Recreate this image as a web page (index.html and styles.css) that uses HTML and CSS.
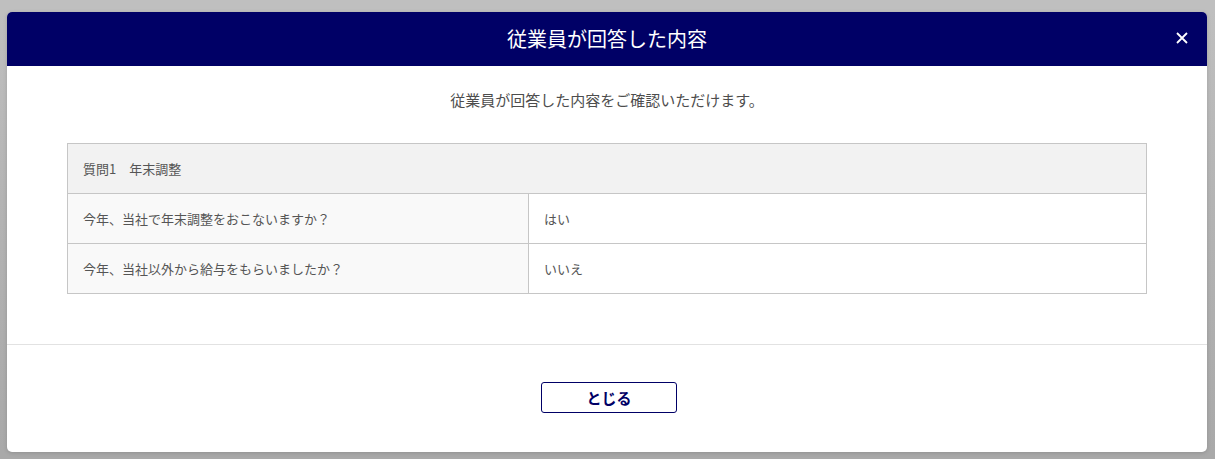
FILE: index.html
```html
<!DOCTYPE html>
<html lang="ja">
<head>
<meta charset="utf-8">
<title>従業員が回答した内容</title>
<link rel="stylesheet" href="styles.css">
</head>
<body>
<div class="backdrop">
  <div class="modal">
    <div class="modal-header">
      <h1 class="modal-title">従業員が回答した内容</h1>
      <button class="close-btn" aria-label="閉じる">
        <svg width="12" height="12" viewBox="0 0 12 12"><path d="M1 1L11 11M11 1L1 11" stroke="#fff" stroke-width="1.8" fill="none"/></svg>
      </button>
    </div>
    <div class="modal-body">
      <p class="lead">従業員が回答した内容をご確認いただけます。</p>
      <div class="qa-table">
        <div class="qa-head">質問1　年末調整</div>
        <div class="qa-row">
          <div class="qa-q">今年、当社で年末調整をおこないますか？</div>
          <div class="qa-a">はい</div>
        </div>
        <div class="qa-row">
          <div class="qa-q">今年、当社以外から給与をもらいましたか？</div>
          <div class="qa-a">いいえ</div>
        </div>
      </div>
    </div>
    <div class="modal-footer">
      <button class="btn-close">とじる</button>
    </div>
  </div>
</div>
</body>
</html>
```

FILE: styles.css
```css
* { box-sizing: border-box; }
html, body { margin: 0; padding: 0; }
body {
  width: 1215px;
  height: 459px;
  overflow: hidden;
  font-family: "Noto Sans CJK JP", "Noto Sans", sans-serif;
  background: linear-gradient(to right, #c2c2c2 0, #c2c2c2 4px, #b6b6b6 4px, #b6b6b6 6px, #bdbdbd 6px);
}
.backdrop {
  height: 459px;
  padding: 12px 8px 7px 7px;
  background: linear-gradient(to bottom, #bfbfbf 0, #bfbfbf 12px, #b4b4b4 200px, #a9a9a9 452px);
}
.modal {
  width: 1200px;
  height: 440px;
  background: #fff;
  border-radius: 5px;
  overflow: hidden;
  display: flex;
  flex-direction: column;
  box-shadow: 0 1px 4px rgba(0,0,0,0.15);
}
.modal-header {
  height: 54px;
  flex: none;
  background: #000066;
  display: flex;
  align-items: center;
  justify-content: center;
  position: relative;
}
.modal-title {
  margin: 0;
  color: #fff;
  font-size: 20px;
  font-weight: 400;
  line-height: 1;
}
.close-btn {
  position: absolute;
  right: 19px;
  top: 20px;
  width: 12px;
  height: 12px;
  padding: 0;
  border: 0;
  background: none;
  display: flex;
}
.modal-body {
  flex: none;
  height: 279px;
  padding: 24px 60px 0;
  border-bottom: 1px solid #e2e2e2;
}
.lead {
  margin: 0;
  text-align: center;
  font-size: 15px;
  line-height: 20px;
  color: #4d4d4d;
}
.qa-table {
  margin-top: 33px;
  border: 1px solid #c6c6c6;
  font-size: 13px;
  color: #555;
}
.qa-head {
  height: 50px;
  background: #f2f2f2;
  padding: 0 15px;
  display: flex;
  align-items: center;
  border-bottom: 1px solid #c6c6c6;
}
.qa-row {
  display: grid;
  grid-template-columns: 461px 1fr;
  height: 49px;
}
.qa-row + .qa-row { border-top: 1px solid #c6c6c6; height: 50px; }
.qa-q, .qa-a {
  display: flex;
  align-items: center;
  padding: 0 15px;
}
.qa-q {
  background: #f9f9f9;
  border-right: 1px solid #c6c6c6;
}
.qa-a { background: #fff; }
.modal-footer {
  flex: 1;
  display: flex;
  align-items: center;
  justify-content: center;
  padding: 0 0 2px 4px;
}
.btn-close {
  width: 136px;
  height: 31px;
  border: 1px solid #000066;
  border-radius: 3px;
  background: #fff;
  color: #000066;
  font-family: "Noto Sans CJK JP", sans-serif;
  font-size: 15px;
  font-weight: 700;
  padding: 0;
}
```
